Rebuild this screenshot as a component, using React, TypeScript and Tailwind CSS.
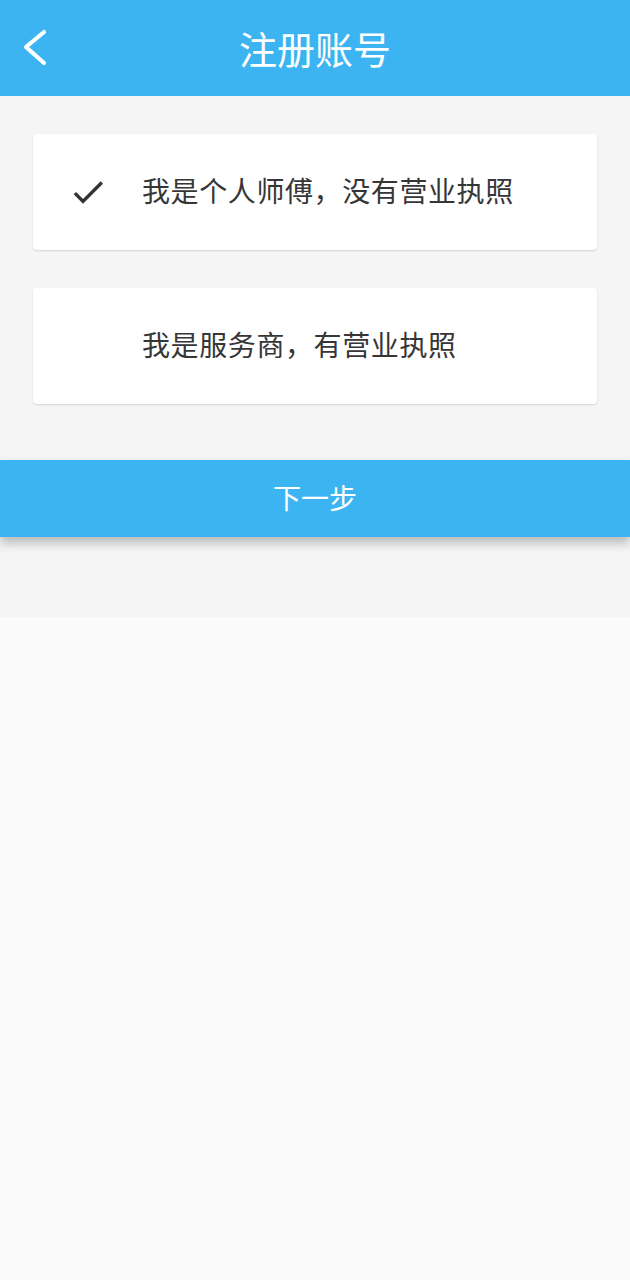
const font = { fontFamily: '"Noto Sans CJK SC", "Noto Sans", sans-serif' };

function CheckIcon() {
  return (
    <svg width="40" height="40" viewBox="0 0 24 24" fill="#333333">
      <path d="M9 16.17L4.83 12l-1.42 1.41L9 19 21 7l-1.41-1.41z" />
    </svg>
  );
}

function OptionCard({ label, checked }: { label: string; checked?: boolean }) {
  return (
    <div className="flex h-[116px] items-center rounded-[4px] bg-white shadow-[0_1px_2px_rgba(0,0,0,0.14)]">
      <div className="flex w-[109px] pl-[35px]">{checked && <CheckIcon />}</div>
      <span className="pb-[4px] text-[28px] leading-none tracking-[0.6px] text-[#363636]">{label}</span>
    </div>
  );
}

export default function App() {
  return (
    <div className="flex min-h-[1280px] flex-col bg-[#fafafa]" style={font}>
      <header className="grid h-[96px] grid-cols-[80px_1fr_80px] items-center bg-[#3db4f2]">
        <button className="flex h-full items-center pl-[22px]">
          <svg width="26" height="38" viewBox="0 0 26 38" fill="none">
            <polyline points="22,3 4,18 22,34" stroke="#ffffff" strokeWidth="4.2" strokeLinecap="round" strokeLinejoin="round" />
          </svg>
        </button>
        <h1 className="text-center text-[38px] leading-none text-white">注册账号</h1>
        <div />
      </header>

      <main className="bg-[#f5f5f5] pt-[38px] pb-[80px]">
        <div className="flex flex-col gap-[38px] px-[33px]">
          <OptionCard label="我是个人师傅，没有营业执照" checked />
          <OptionCard label="我是服务商，有营业执照" />
        </div>
        <button className="mt-[56px] flex h-[77px] w-full items-center justify-center bg-[#3db4f2] pb-[3px] text-[28px] text-white shadow-[0_6px_10px_rgba(0,0,0,0.25)]">
          下一步
        </button>
      </main>
    </div>
  );
}
